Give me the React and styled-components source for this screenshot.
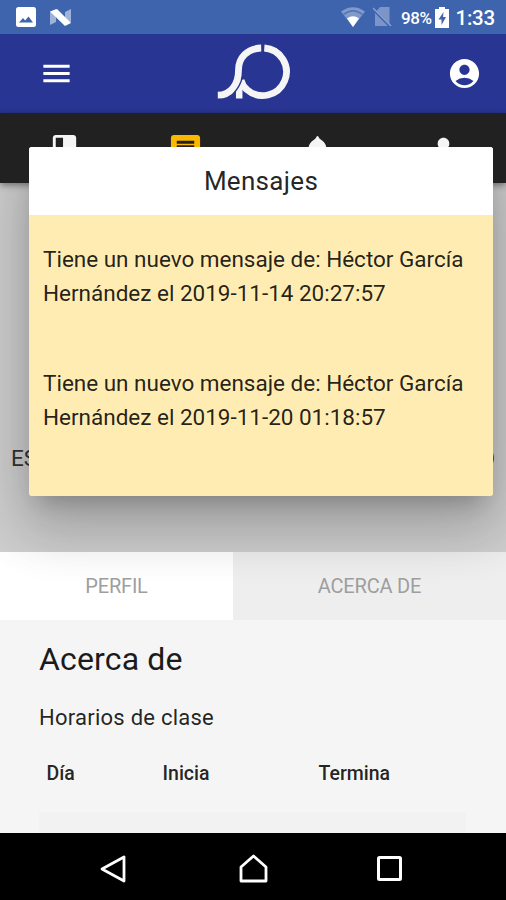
import React from "react";
import styled, { createGlobalStyle } from "styled-components";
import {
    MdAccountCircle,
    MdBook,
    MdMenu,
    MdMessage,
    MdPerson,
} from "react-icons/md";

const GlobalStyle = createGlobalStyle`
    * {
        box-sizing: border-box;
    }
    body {
        margin: 0;
        font-family: Roboto, "Liberation Sans", sans-serif;
        color: rgba(0, 0, 0, 0.87);
    }
    svg {
        display: block;
        flex-shrink: 0;
    }
`;

const ScreenStyled = styled.div`
    position: relative;
    display: flex;
    flex-direction: column;
    width: 506px;
    height: 900px;
    overflow: hidden;
    background: #f5f5f5;
`;

const StatusBarStyled = styled.div`
    display: flex;
    justify-content: space-between;
    align-items: center;
    height: 34px;
    padding: 0 11px 0 16px;
    background: #3e64ae;
    color: #fff;
`;

const StatusGroupStyled = styled.div`
    display: flex;
    align-items: center;
    gap: ${(props) => props.$gap}px;
`;

const BatteryTextStyled = styled.span`
    margin: 2px 4px 0 1px;
    font-size: 17px;
    font-weight: 500;
    letter-spacing: -0.5px;
`;

const ClockStyled = styled.span`
    margin: 1px 0 0 6px;
    font-size: 20.5px;
    font-weight: 500;
    letter-spacing: -0.2px;
`;

const HeaderStyled = styled.header`
    display: grid;
    grid-template-columns: 113px 282px 1fr;
    align-items: center;
    justify-items: center;
    height: 79px;
    padding-right: 28px;
    background: #283593;
    color: #fff;
    > :nth-child(2) {
        margin-bottom: 4px;
    }
    > :last-child {
        justify-self: end;
        margin-right: -4px;
    }
`;

const IconBarStyled = styled.nav`
    position: relative;
    display: grid;
    grid-template-columns: 128px 115px 149px 103px;
    justify-items: center;
    height: 70px;
    padding-top: 19px;
    background: #212121;
    color: #f5f5f5;
    box-shadow: 0 2px 7px rgba(0, 0, 0, 0.45);
    .active {
        color: #fbb800;
    }
`;

const HeroStyled = styled.div`
    display: flex;
    justify-content: space-between;
    align-items: flex-start;
    height: 369px;
    padding: 261px 11px 0;
    background: #cfcfcf;
    font-size: 22.5px;
    line-height: 28px;
    color: #333;
`;

const TabsStyled = styled.div`
    display: grid;
    grid-template-columns: 233px 273px;
    height: 68px;
`;

const TabStyled = styled.div`
    display: flex;
    align-items: center;
    justify-content: center;
    padding-bottom: 1px;
    background: ${(props) => (props.$active ? "#fff" : "#eeeeee")};
    color: #9e9e9e;
    font-size: 20px;
    letter-spacing: -0.2px;
`;

const ContentStyled = styled.main`
    flex: 1;
    padding: 20px 40px 0 39px;
    overflow: hidden;
`;

const TitleStyled = styled.h1`
    margin: 0;
    font-size: 32px;
    font-weight: 400;
    line-height: 38px;
    letter-spacing: 0.15px;
    color: #1b1b1b;
`;

const SubtitleStyled = styled.p`
    margin: 23px 0 0;
    font-size: 22px;
    line-height: 34px;
    letter-spacing: 0.25px;
`;

const TableHeadStyled = styled.div`
    display: grid;
    grid-template-columns: 116px 156px 1fr;
    padding: 26px 0 0 7.5px;
    font-size: 19.5px;
    font-weight: 500;
    line-height: 26px;
`;

const TableRowStyled = styled.div`
    height: 30px;
    margin-top: 25px;
    background: #f2f2f2;
`;

const SystemNavStyled = styled.div`
    display: flex;
    align-items: center;
    justify-content: space-between;
    height: 67px;
    padding: 4px 104px 0 100px;
    background: #000;
    > :nth-child(2) {
        margin-left: 4px;
    }
`;

const ModalStyled = styled.section`
    position: absolute;
    top: 147px;
    left: 29px;
    width: 464px;
    height: 349px;
    border-radius: 3px;
    overflow: hidden;
    background: #ffecb3;
`;

const ModalShadowStyled = styled.div`
    position: absolute;
    top: 147px;
    left: 29px;
    width: 464px;
    height: 349px;
    border-radius: 3px;
    box-shadow:
        0 34px 53px 4px rgba(0, 0, 0, 0.14),
        0 13px 65px 11px rgba(0, 0, 0, 0.12),
        0 15px 21px -10px rgba(0, 0, 0, 0.2);
    clip-path: inset(36px -40px -124px -40px);
`;

const ModalTitleStyled = styled.h2`
    margin: 0;
    height: 68px;
    background: #fff;
    text-align: center;
    font-size: 26px;
    font-weight: 400;
    line-height: 68px;
    letter-spacing: 0.3px;
`;

const MessageStyled = styled.p`
    margin: 0 0 56px;
    padding-left: 14px;
    font-size: 22.5px;
    line-height: 34px;
    letter-spacing: -0.01px;
    &:first-of-type {
        margin-top: 27px;
    }
`;

const messages = [
    { id: 1, from: "Héctor García Hernández", date: "2019-11-14 20:27:57" },
    { id: 2, from: "Héctor García Hernández", date: "2019-11-20 01:18:57" },
];

const PictureIcon = () => (
    <svg width="20" height="20" viewBox="0 0 20 20">
        <rect width="20" height="20" rx="2.5" fill="#fff" />
        <path d="M3 15.5l4-4.5 2.2 2.4L12.5 9.500l4.500 6z" fill="#3e64ae" />
    </svg>
);

const NougatIcon = () => (
    <svg width="21" height="17" viewBox="0 0 21 17">
        <path d="M0 3l6-3v13l-6 3zM15 3l6-3v13l-6 3z" fill="#fff" opacity=".5" />
        <path d="M0 2.500L7 0 21 14l-6 3z" fill="#fff" />
    </svg>
);

const WifiIcon = () => (
    <svg width="24" height="20" viewBox="0 0 24 20">
        <path d="M0 4.500Q12-4 24 4.500L12 20z" fill="#fff" opacity=".35" />
        <path
            d="M2.500 7.500Q12 0 21.500 7.500"
            fill="none"
            stroke="#3e64ae"
            strokeWidth="1.300"
            opacity=".7"
        />
        <path d="M6 11.500Q12 7 18 11.500L12 20z" fill="#fff" />
    </svg>
);

const NoSimIcon = () => (
    <svg width="19" height="20" viewBox="0 0 19 20">
        <path d="M7 0h9.500v19H2V6z" fill="#fff" opacity=".32" />
        <path d="M0 2l18 18" stroke="#3e64ae" strokeWidth="3" />
        <path d="M0 1l18 18" stroke="#fff" strokeWidth="1.500" opacity=".4" />
    </svg>
);

const BatteryIcon = () => (
    <svg width="14" height="21" viewBox="0 0 14 21">
        <path d="M4 0h6v2h4v19H0V2h4z" fill="#fff" />
        <path d="M8.500 5L3.500 12.500h3V18l4.500-8H8z" fill="#3e64ae" />
    </svg>
);

const BellIcon = () => (
    <svg width="35" height="35" viewBox="0 0 35 35">
        <path
            d="M17.500 4C18.400 4 18.700 5.500 20 7C24 9.500 26.500 12.500 26.500 17V24L29 27v2H6v-2L8.500 24V17C8.500 12.500 11 9.500 15 7C16.300 5.500 16.600 4 17.500 4z"
            fill="currentColor"
        />
    </svg>
);

const Logo = () => (
    <svg width="74" height="58" viewBox="217 43 74 58">
        <g fill="none" stroke="#f5f5f5" strokeWidth="6.800">
            <path d="M264.300 48a23.800 23.800 0 1 1-17.500 41.500Q242.500 86 241 80" />
            <path d="M261.200 48C247 48.500 238.500 58 238.500 70C238.500 84 231 95.200 217.800 95.200" />
            <path d="M239.200 98.500V89Q239.200 84 241.500 80" strokeWidth="6.500" />
        </g>
        <path
            d="M242.500 77Q240 86 234.800 92"
            fill="none"
            stroke="#283593"
            strokeWidth="1.300"
        />
    </svg>
);

function StatusBar() {
    return (
        <StatusBarStyled>
            <StatusGroupStyled $gap={14}>
                <PictureIcon />
                <NougatIcon />
            </StatusGroupStyled>
            <StatusGroupStyled $gap={8}>
                <WifiIcon />
                <NoSimIcon />
                <StatusGroupStyled $gap={0}>
                    <BatteryTextStyled>98%</BatteryTextStyled>
                    <BatteryIcon />
                    <ClockStyled>1:33</ClockStyled>
                </StatusGroupStyled>
            </StatusGroupStyled>
        </StatusBarStyled>
    );
}

function MessagesModal() {
    return (
        <>
            <ModalShadowStyled />
            <ModalStyled>
                <ModalTitleStyled>Mensajes</ModalTitleStyled>
                {messages.map((mess) => (
                    <MessageStyled key={mess.id}>
                        {`Tiene un nuevo mensaje de: ${mess.from} el ${mess.date}`}
                    </MessageStyled>
                ))}
            </ModalStyled>
        </>
    );
}

function SystemNav() {
    return (
        <SystemNavStyled>
            <svg width="26" height="28" viewBox="0 0 26 28">
                <path
                    d="M2 14L24 2v24z"
                    fill="none"
                    stroke="#fff"
                    strokeWidth="2.800"
                    strokeLinejoin="round"
                />
            </svg>
            <svg width="29" height="29" viewBox="0 0 29 29">
                <path
                    d="M2 13L14.500 2 27 13v14H2z"
                    fill="none"
                    stroke="#fff"
                    strokeWidth="2.800"
                    strokeLinejoin="round"
                />
            </svg>
            <svg width="25" height="25" viewBox="0 0 25 25">
                <rect
                    x="1.500"
                    y="1.500"
                    width="22"
                    height="22"
                    rx="1"
                    fill="none"
                    stroke="#fff"
                    strokeWidth="3"
                />
            </svg>
        </SystemNavStyled>
    );
}

function App() {
    return (
        <>
            <GlobalStyle />
            <ScreenStyled>
                <StatusBar />
                <HeaderStyled>
                    <MdMenu size={35} />
                    <Logo />
                    <MdAccountCircle size={35} />
                </HeaderStyled>
                <IconBarStyled>
                    <MdBook size={35} />
                    <MdMessage size={35} className="active" />
                    <BellIcon />
                    <MdPerson size={35} />
                </IconBarStyled>
                <HeroStyled>
                    <span>ES</span>
                    <span>O</span>
                </HeroStyled>
                <TabsStyled>
                    <TabStyled $active>PERFIL</TabStyled>
                    <TabStyled>ACERCA DE</TabStyled>
                </TabsStyled>
                <ContentStyled>
                    <TitleStyled>Acerca de</TitleStyled>
                    <SubtitleStyled>Horarios de clase</SubtitleStyled>
                    <TableHeadStyled>
                        <span>Día</span>
                        <span>Inicia</span>
                        <span>Termina</span>
                    </TableHeadStyled>
                    <TableRowStyled />
                </ContentStyled>
                <SystemNav />
                <MessagesModal />
            </ScreenStyled>
        </>
    );
}

export default App;
